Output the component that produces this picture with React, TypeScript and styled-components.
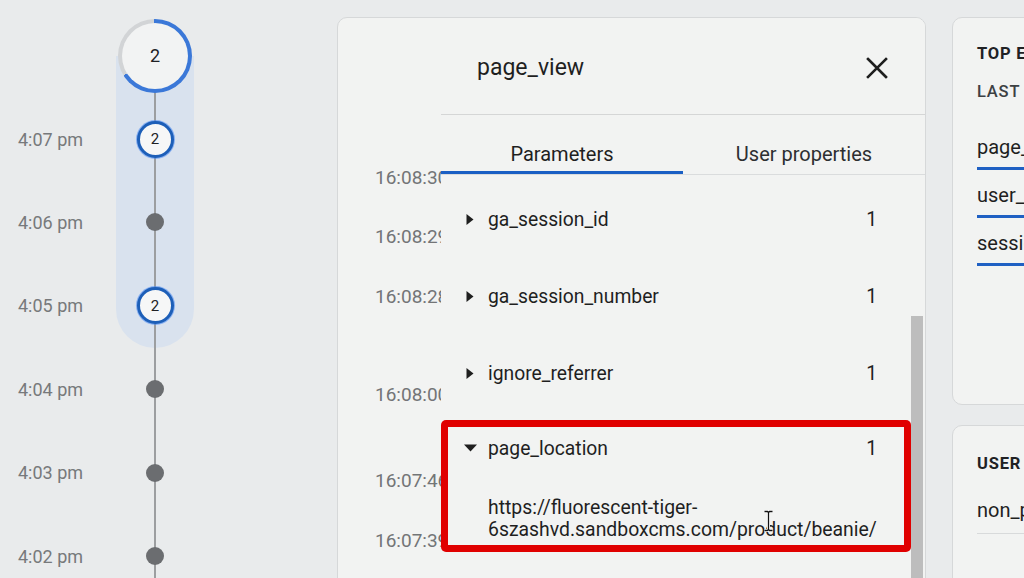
import React from 'react';
import styled, { createGlobalStyle } from 'styled-components';

const Global = createGlobalStyle`
  html, body { margin: 0; padding: 0; height: 100%; overflow: hidden; }
  body {
    font-family: Roboto, "Noto Sans", "Liberation Sans", sans-serif;
    background: #e9ebec;
    color: #1f1f1f;
  }
  #root { height: 100%; }
`;

const Page = styled.div`
  display: flex;
  align-items: flex-start;
  width: 1024px;
  height: 100%;
  overflow: hidden;
  background: #e9ebec;
`;

/* ---------- timeline ---------- */

const Timeline = styled.div`
  flex: 0 0 337px;
  display: grid;
  grid-template-columns: 116px 78px;
  grid-auto-rows: 83.4px;
  padding-top: 14px;
  align-content: start;
`;

const Band = styled.div`
  grid-column: 2;
  grid-row: 1 / 5;
  background: linear-gradient(to bottom, transparent 42px, #d9e2ee 42px);
  border-radius: 0 0 39px 39px;
`;

const Rail = styled.div`
  grid-column: 2;
  grid-row: 1 / 9;
  justify-self: center;
  width: 1.5px;
  margin-top: 42px;
  background: #9c9ea0;
`;

const TimeLabel = styled.div<{ $row: number }>`
  grid-column: 1;
  grid-row: ${p => p.$row};
  align-self: center;
  padding-left: 18px;
  font-size: 18px;
  color: #77797b;
  white-space: nowrap;
`;

const NodeCell = styled.div<{ $row: number }>`
  grid-column: 2;
  grid-row: ${p => p.$row};
  display: flex;
  align-items: center;
  justify-content: center;
  z-index: 1;
`;

const BigRing = styled.div`
  width: 74px;
  height: 74px;
  box-sizing: border-box;
  padding: 4px;
  border-radius: 50%;
  background: conic-gradient(#3b78d8 0deg 238deg, #d2d4d6 238deg 358deg, #3b78d8 358deg);
  display: flex;
`;

const BigFace = styled.div`
  flex: 1;
  border-radius: 50%;
  background: #f2f3f3;
  display: flex;
  align-items: center;
  justify-content: center;
  font-size: 18px;
  color: #202124;
`;

const SmallNode = styled.div`
  width: 37px;
  height: 37px;
  box-sizing: border-box;
  border-radius: 50%;
  border: 3px solid #1d5fb8;
  box-shadow: 0 0 0 1px rgba(66, 133, 244, 0.55);
  background: #f6f7f7;
  display: flex;
  align-items: center;
  justify-content: center;
  font-size: 15px;
  color: #202124;
`;

const Dot = styled.div`
  width: 18px;
  height: 18px;
  border-radius: 50%;
  background: #6b6d70;
`;

/* ---------- middle panel ---------- */

const Panel = styled.section`
  flex: 0 0 589px;
  margin-top: 17px;
  height: 620px;
  box-sizing: border-box;
  border: 1px solid #d6d8d9;
  border-radius: 10px;
  background: #f2f3f2;
  display: flex;
  overflow: hidden;
`;

const TimesCol = styled.div`
  flex: 0 0 103px;
  box-sizing: border-box;
  padding-left: 37px;
  overflow: hidden;
  display: flex;
  flex-direction: column;
`;

const ListTime = styled.div<{ $gap: number }>`
  margin-top: ${p => p.$gap}px;
  line-height: 20px;
  font-size: 19px;
  color: #737577;
  white-space: nowrap;
`;

const Drawer = styled.div`
  flex: 1;
  display: flex;
  flex-direction: column;
  background: #f2f3f2;
`;

const DrawerHeader = styled.header`
  height: 97px;
  box-sizing: border-box;
  padding: 3px 37px 0 36px;
  border-bottom: 1px solid #d5d6d6;
  display: flex;
  align-items: center;
  justify-content: space-between;
`;

const Title = styled.h2`
  margin: 0;
  font-size: 23px;
  font-weight: 400;
  color: #1f1f1f;
`;

const CloseButton = styled.button`
  border: 0;
  padding: 0;
  background: none;
  width: 22px;
  height: 22px;
  display: flex;
  align-items: center;
  justify-content: center;
  cursor: pointer;
`;

const Tabs = styled.div`
  height: 60px;
  box-sizing: border-box;
  border-bottom: 1px solid #dadcdd;
  display: flex;
`;

const Tab = styled.div<{ $active?: boolean }>`
  flex: 1;
  display: flex;
  align-items: flex-end;
  justify-content: center;
  padding-bottom: 9px;
  line-height: 22px;
  font-size: 20px;
  color: ${p => (p.$active ? '#1f1f1f' : '#2d2f31')};
  box-shadow: ${p => (p.$active ? 'inset 0 -3px 0 #1a5fc4' : 'none')};
`;

const Body = styled.div`
  flex: 1;
  display: flex;
  min-height: 0;
`;

const ParamList = styled.div`
  flex: 1;
  padding-top: 6px;
  display: flex;
  flex-direction: column;
`;

const ParamRow = styled.div<{ $expanded?: boolean }>`
  display: flex;
  flex-direction: column;
  margin-top: ${p => (p.$expanded ? '8px' : '0')};
  border-radius: ${p => (p.$expanded ? '5px' : '0')};
  box-shadow: ${p => (p.$expanded ? 'inset 0 0 0 7px #e00000' : 'none')};
  padding-bottom: ${p => (p.$expanded ? '11px' : '0')};
`;

const RowHead = styled.div<{ $h: number }>`
  height: ${p => p.$h}px;
  display: flex;
  align-items: center;
  padding: 0 34px 0 22px;
`;

const Caret = styled.span`
  width: 14px;
  margin-right: 11px;
  display: flex;
  align-items: center;
  justify-content: center;
`;

const ParamName = styled.span`
  flex: 1;
  font-size: 19.3px;
  color: #1f1f1f;
`;

const Count = styled.span`
  font-size: 19.3px;
  color: #1f1f1f;
`;

const UrlValue = styled.div`
  position: relative;
  margin-top: 21px;
  padding-left: 47px;
  font-size: 19.4px;
  line-height: 22px;
  color: #1f1f1f;
`;

const UrlLine = styled.span`
  display: block;
  white-space: nowrap;
`;

const TextCursor = styled.svg`
  position: absolute;
  left: 322px;
  top: 13px;
`;

const ScrollTrack = styled.div`
  flex: 0 0 14px;
  padding-top: 141px;
  display: flex;
`;

const ScrollThumb = styled.div`
  width: 12px;
  background: #bdbdbd;
`;

/* ---------- right column ---------- */

const Side = styled.aside`
  flex: 0 0 320px;
  margin-left: 26px;
  margin-top: 17px;
  display: flex;
  flex-direction: column;
  gap: 20px;
`;

const Card = styled.div<{ $h: number; $pt: number }>`
  height: ${p => p.$h}px;
  box-sizing: border-box;
  padding: ${p => p.$pt}px 0 0 24px;
  border: 1px solid #d6d8d9;
  border-radius: 10px;
  background: #f2f3f2;
  display: flex;
  flex-direction: column;
  white-space: nowrap;
`;

const CardTitle = styled.div`
  line-height: 20px;
  font-size: 16.5px;
  font-weight: 700;
  letter-spacing: 0.8px;
  color: #202124;
`;

const CardSub = styled.div`
  margin-top: 18px;
  line-height: 20px;
  font-size: 16.5px;
  font-weight: 500;
  letter-spacing: 0.8px;
  color: #3c4043;
`;

const EventList = styled.div`
  margin-top: 33px;
  display: flex;
  flex-direction: column;
`;

const EventItem = styled.div`
  height: 48px;
  display: flex;
  flex-direction: column;
`;

const EventName = styled.span`
  line-height: 24px;
  font-size: 20px;
  color: #1f1f1f;
`;

const EventBar = styled.div`
  margin-top: 8px;
  height: 3px;
  background: #1f60c3;
`;

const PropItem = styled.div`
  margin-top: 24px;
  padding-bottom: 11px;
  border-bottom: 1px solid #d8dadb;
  line-height: 24px;
  font-size: 20px;
  color: #1f1f1f;
`;

/* ---------- data ---------- */

const timeline: { label?: string; kind: 'big' | 'count' | 'dot' }[] = [
  { kind: 'big' },
  { label: '4:07 pm', kind: 'count' },
  { label: '4:06 pm', kind: 'dot' },
  { label: '4:05 pm', kind: 'count' },
  { label: '4:04 pm', kind: 'dot' },
  { label: '4:03 pm', kind: 'dot' },
  { label: '4:02 pm', kind: 'dot' },
  { label: '4:01 pm', kind: 'dot' },
];

const listTimes = [
  { t: '16:08:30', gap: 150 },
  { t: '16:08:29', gap: 39 },
  { t: '16:08:28', gap: 40 },
  { t: '16:08:00', gap: 78 },
  { t: '16:07:46', gap: 66 },
  { t: '16:07:39', gap: 40 },
];

const params = ['ga_session_id', 'ga_session_number', 'ignore_referrer'];

const CaretRight = () => (
  <svg width="8" height="11" viewBox="0 0 8 11">
    <polygon points="0.5,0 7.5,5.5 0.5,11" fill="#1f1f1f" />
  </svg>
);

const CaretDown = () => (
  <svg width="13" height="8" viewBox="0 0 13 8">
    <polygon points="0,0.5 13,0.5 6.5,7.5" fill="#1f1f1f" />
  </svg>
);

export default function App() {
  return (
    <>
      <Global />
      <Page>
        <Timeline>
          <Band />
          <Rail />
          {timeline.map((n, i) => (
            <React.Fragment key={i}>
              {n.label && <TimeLabel $row={i + 1}>{n.label}</TimeLabel>}
              <NodeCell $row={i + 1}>
                {n.kind === 'big' && (
                  <BigRing>
                    <BigFace>2</BigFace>
                  </BigRing>
                )}
                {n.kind === 'count' && <SmallNode>2</SmallNode>}
                {n.kind === 'dot' && <Dot />}
              </NodeCell>
            </React.Fragment>
          ))}
        </Timeline>

        <Panel>
          <TimesCol>
            {listTimes.map(x => (
              <ListTime key={x.t} $gap={x.gap}>{x.t}</ListTime>
            ))}
          </TimesCol>
          <Drawer>
            <DrawerHeader>
              <Title>page_view</Title>
              <CloseButton aria-label="Close">
                <svg width="22" height="22" viewBox="0 0 22 22">
                  <path d="M2 2 L20 20 M20 2 L2 20" stroke="#1f1f1f" strokeWidth="2.6" strokeLinecap="square" />
                </svg>
              </CloseButton>
            </DrawerHeader>
            <Tabs>
              <Tab $active>Parameters</Tab>
              <Tab>User properties</Tab>
            </Tabs>
            <Body>
              <ParamList>
                {params.map(p => (
                  <ParamRow key={p}>
                    <RowHead $h={77}>
                      <Caret><CaretRight /></Caret>
                      <ParamName>{p}</ParamName>
                      <Count>1</Count>
                    </RowHead>
                  </ParamRow>
                ))}
                <ParamRow $expanded>
                  <RowHead $h={56}>
                    <Caret><CaretDown /></Caret>
                    <ParamName>page_location</ParamName>
                    <Count>1</Count>
                  </RowHead>
                  <UrlValue>
                    <UrlLine>https://fluorescent-tiger-</UrlLine>
                    <UrlLine>6szashvd.sandboxcms.com/product/beanie/</UrlLine>
                    <TextCursor width="11" height="22" viewBox="0 0 11 22">
                      <path d="M1.5 1.5 H4.5 L5.5 2.5 L6.5 1.5 H9.5 M5.5 2.5 V19.5 M1.5 20.5 H4.5 L5.5 19.5 L6.5 20.5 H9.5" stroke="#ffffff" strokeWidth="3" fill="none" />
                      <path d="M1.5 1.5 H4.5 L5.5 2.5 L6.5 1.5 H9.5 M5.5 2.5 V19.5 M1.5 20.5 H4.5 L5.5 19.5 L6.5 20.5 H9.5" stroke="#111111" strokeWidth="1.3" fill="none" />
                    </TextCursor>
                  </UrlValue>
                </ParamRow>
              </ParamList>
              <ScrollTrack>
                <ScrollThumb />
              </ScrollTrack>
            </Body>
          </Drawer>
        </Panel>

        <Side>
          <Card $h={388} $pt={26}>
            <CardTitle>TOP EVENTS</CardTitle>
            <CardSub>LAST 30 MINUTES</CardSub>
            <EventList>
              {['page_view', 'user_engagement', 'session_start'].map(e => (
                <EventItem key={e}>
                  <EventName>{e}</EventName>
                  <EventBar />
                </EventItem>
              ))}
            </EventList>
          </Card>
          <Card $h={300} $pt={28}>
            <CardTitle>USER PROPERTIES</CardTitle>
            <PropItem>non_personalized_ads</PropItem>
          </Card>
        </Side>
      </Page>
    </>
  );
}
